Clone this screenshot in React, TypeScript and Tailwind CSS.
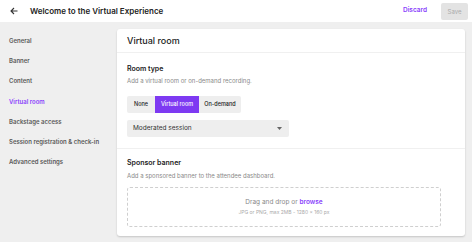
import React from "react";

const navItems = [
  "General",
  "Banner",
  "Content",
  "Virtual room",
  "Backstage access",
  "Session registration & check-in",
  "Advanced settings",
];

const App = () => {
  return (
    <div className="w-[472px] h-[242px] bg-[#efefef] font-['Inter',sans-serif] flex flex-col overflow-hidden text-[#222]">
      <div className="h-[22px] bg-white flex items-center shrink-0">
        <svg
          width="8"
          height="8"
          viewBox="0 0 8 8"
          className="ml-[10px]"
          fill="none"
          stroke="#333"
          strokeWidth="1.1"
        >
          <path d="M7.5 4H1M4 1L1 4l3 3" />
        </svg>
        <div className="ml-[12px] text-[8px] font-semibold text-[#222]">
          Welcome to the Virtual Experience
        </div>
        <div className="ml-auto flex items-center">
          <span className="text-[6.5px] font-semibold text-[#8a3ffc]">Discard</span>
          <button className="ml-[14px] mr-[4px] w-[27px] h-[17px] rounded-[2px] bg-[#e3e3e3] text-[6px] text-[#aaa]">
            Save
          </button>
        </div>
      </div>

      <div className="flex flex-1">
        <div className="w-[117px] pl-[9px] pt-[8px] flex flex-col shrink-0">
          {navItems.map((item) => (
            <div
              key={item}
              className={
                "h-[20.3px] flex items-center text-[6px] font-semibold " +
                (item === "Virtual room" ? "text-[#8a3ffc]" : "text-[#5a5a5a]")
              }
            >
              {item}
            </div>
          ))}
        </div>

        <div className="mt-[7px] mb-[6px] mr-[7px] flex-1 bg-white rounded-[3px] shadow-[0_1px_2px_rgba(0,0,0,0.18)] flex flex-col">
          <div className="h-[24px] px-[10px] flex items-center border-b border-[#f0f0f0] text-[9px] font-medium">
            Virtual room
          </div>

          <div className="px-[10px] pt-[11px] pb-[11px] border-b border-[#f0f0f0]">
            <div className="text-[7px] leading-[10px] font-semibold">Room type</div>
            <div className="mt-[2px] text-[6px] leading-[10px] text-[#8a8a8a]">
              Add a virtual room or on-demand recording.
            </div>
            <div className="mt-[10px] flex w-[114px] h-[17px] bg-[#eeeeee] rounded-[2px] text-[5.5px] font-medium">
              <div className="w-[28px] flex items-center justify-center">None</div>
              <div className="w-[44px] flex items-center justify-center bg-[#7e3af2] text-white">
                Virtual room
              </div>
              <div className="w-[42px] flex items-center justify-center">On-demand</div>
            </div>
            <div className="mt-[7px] w-[162px] h-[17px] bg-[#eeeeee] rounded-[2px] px-[6px] flex items-center text-[6.5px] text-[#333]">
              <span>Moderated session</span>
              <svg width="5" height="3" viewBox="0 0 5 3" className="ml-auto mr-[1px]">
                <path d="M0 0h5L2.5 3z" fill="#666" />
              </svg>
            </div>
          </div>

          <div className="px-[10px] pt-[9px]">
            <div className="text-[7px] leading-[10px] font-semibold">Sponsor banner</div>
            <div className="mt-[3px] text-[6px] leading-[10px] text-[#8a8a8a]">
              Add a sponsored banner to the attendee dashboard.
            </div>
            <div className="mt-[6px] w-[314px] h-[40px] border border-dashed border-[#cfcfcf] rounded-[3px] flex flex-col items-center justify-center">
              <div className="text-[6.5px] leading-[10px] text-[#8a8a8a]">
                Drag and drop or <span className="text-[#8a3ffc] font-semibold">browse</span>
              </div>
              <div className="text-[5px] leading-[10px] text-[#aaa]">
                JPG or PNG, max 2MB - 1280 x 160 px
              </div>
            </div>
          </div>
        </div>
      </div>
    </div>
  );
};

export default App;
